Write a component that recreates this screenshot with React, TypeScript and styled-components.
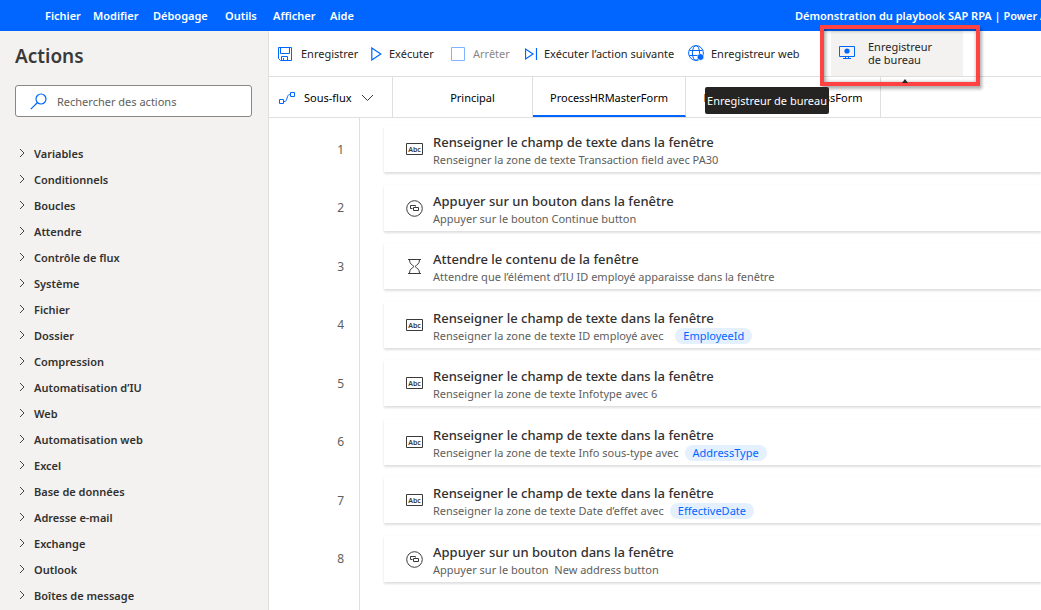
import React from "react";
import styled, { createGlobalStyle, css } from "styled-components";

const blue = "#0066ff";
const line = "#e1dfdd";

const GlobalStyle = createGlobalStyle`
  * { box-sizing: border-box; }
  html, body { height: 100%; }
  #root { height: 100%; }
  body {
    margin: 0;
    overflow: hidden;
    background: #fff;
    color: #252423;
    font-family: "Noto Sans", "Open Sans", sans-serif;
    font-size: 11px;
    line-height: 16px;
  }
  button, input { font: inherit; color: inherit; }
  button { border: 0; padding: 0; background: none; cursor: pointer; text-align: left; white-space: nowrap; }
  svg { display: block; flex: none; }
`;

const Page = styled.div`
  display: flex;
  flex-direction: column;
  min-height: 100%;
`;

const TopBar = styled.header`
  display: flex;
  justify-content: space-between;
  align-items: center;
  height: 31px;
  padding-left: 45px;
  background: ${blue};
  color: #fff;
  font-weight: 600;
`;

const Menu = styled.nav`
  display: grid;
  grid-template-columns: 48px 60px 72px 48px 57px 40px;
`;

const WindowTitle = styled.div`
  flex: none;
  width: 246px;
  overflow: hidden;
  white-space: nowrap;
`;

const Body = styled.div`
  display: flex;
  flex: 1;
`;

const Sidebar = styled.aside`
  flex: none;
  width: 269px;
  padding: 12px 16px 0 15px;
  border-right: 1px solid ${line};
  background: #f3f2f1;
`;

const Heading = styled.h1`
  margin: 0;
  font-size: 19px;
  line-height: 26px;
  font-weight: 600;
  color: #3b3a39;
`;

const SearchBox = styled.label`
  display: flex;
  align-items: center;
  gap: 10px;
  height: 32px;
  margin-top: 16px;
  padding: 0 14px;
  border: 1px solid #8a8886;
  border-radius: 3px;
  background: #fff;
`;

const SearchInput = styled.input`
  flex: 1;
  min-width: 0;
  padding: 2px 0 0;
  border: 0;
  outline: 0;
  background: none;
  &::placeholder { color: #605e5c; opacity: 1; }
`;

const Tree = styled.ul`
  margin: 24px 0 0;
  padding: 0;
  list-style: none;
`;

const TreeButton = styled.button`
  display: flex;
  align-items: center;
  gap: 8px;
  width: 100%;
  height: 26px;
  padding-left: 3px;
  color: #323130;
  font-weight: 600;
`;

const Main = styled.main`
  display: flex;
  flex: 1;
  flex-direction: column;
  min-width: 0;
`;

const Toolbar = styled.div`
  display: grid;
  grid-template-columns: 93px 80px 74px 163px 143px 132px;
  height: 46px;
  padding-left: 9px;
  border-bottom: 1px solid ${line};
`;

const Tool = styled.button<{ $slot: number }>`
  display: grid;
  grid-template-columns: ${(p) => p.$slot}px auto;
  justify-content: start;
  align-items: center;
  &:disabled { color: #8a8886; cursor: default; }
`;

const RecorderSlot = styled.div`
  position: relative;
`;

const Recorder = styled.button`
  display: flex;
  align-items: center;
  gap: 13px;
  width: 100%;
  height: 45px;
  padding: 0 0 2px 8px;
  background: #f3f2f1;
  line-height: 13px;
`;

const Highlight = styled.div`
  position: absolute;
  inset: -6px -17px -10px -11px;
  border: 4px solid #ff4343;
  box-shadow: 2px 3px 3px rgba(0, 0, 0, 0.3), inset 1px 1px 4px rgba(0, 0, 0, 0.45);
  pointer-events: none;
`;

const TooltipArrow = styled.span`
  position: absolute;
  left: 71px;
  top: 48px;
  border: 3px solid transparent;
  border-top: 0;
  border-bottom: 4px solid #252423;
`;

const Tooltip = styled.div`
  position: absolute;
  right: 134px;
  top: 56px;
  z-index: 1;
  height: 27px;
  padding: 0 2px;
  border-radius: 2px;
  background: #252423;
  color: #fff;
  line-height: 28px;
  white-space: nowrap;
`;

const Tabs = styled.div`
  display: grid;
  grid-template-columns: 124px 140px 153px 195px;
  height: 41px;
  border-bottom: 1px solid ${line};
`;

const Tab = styled.button<{ $active?: boolean; $indent?: number }>`
  padding: 2px 0 0 ${(p) => p.$indent ?? 0}px;
  text-align: center;
  border-right: 1px solid ${line};
  color: #000;
  ${(p) => p.$active && css`border-bottom: 2px solid ${blue}; padding-top: 4px;`}
`;

const Subflows = styled(Tab)`
  display: flex;
  align-items: center;
  gap: 9px;
`;

const Steps = styled.ol`
  flex: 1;
  margin: 0;
  padding: 0;
  list-style: none;
  background: linear-gradient(to right, transparent 90px, ${line} 90px, ${line} 91px, transparent 91px);
`;

const Step = styled.li`
  display: grid;
  grid-template-columns: 75px 1fr;
  column-gap: 40px;
  height: 58px;
  padding-top: 8px;
  &:nth-child(odd) { height: 59px; }
`;

const StepNumber = styled.span`
  align-self: center;
  padding-bottom: 4px;
  text-align: right;
  color: #605e5c;
  font-size: 12px;
`;

const Card = styled.div`
  display: flex;
  align-items: center;
  gap: 10px;
  height: 46px;
  padding-left: 22px;
  box-shadow: 0 2px 2px rgba(0, 0, 0, 0.12), 0 0 2px rgba(0, 0, 0, 0.03);
  background: #fff;
`;

const StepBody = styled.div`
  padding-top: 3px;
`;

const StepTitle = styled.h2`
  margin: 0;
  color: #323130;
  font-size: 13px;
  line-height: 18px;
  font-weight: 500;
  white-space: nowrap;
`;

const StepText = styled.p`
  margin: 0;
  color: #605e5c;
  line-height: 17px;
  white-space: pre;
`;

const Variable = styled.span`
  display: inline-block;
  margin-left: 6px;
  padding: 0 8px;
  border-radius: 8px;
  background: #e5f0ff;
  color: ${blue};
  line-height: 16px;
`;

const Stroke = ({ w, h, c = blue, children }: { w: number; h: number; c?: string; children: React.ReactNode }) => (
  <svg width={w} height={h} viewBox={`0 0 ${w} ${h}`} fill="none" stroke={c} aria-hidden="true">{children}</svg>
);

const SaveIcon = () => (
  <Stroke w={14} h={14}>
    <path d="M.5 .5h13v13h-11l-2-2zM2.5 .5v6h9v-6M3.5 13.5v-4h6v4M5.5 13v-2" />
  </Stroke>
);
const PlayIcon = () => <Stroke w={11} h={14}><path d="M.8 1v12L9.800 7z" strokeWidth="1.2" /></Stroke>;
const StopIcon = () => <Stroke w={15} h={14} c="#7fb2ff"><path d="M.5 .5h13v13H.5z" /></Stroke>;
const NextIcon = () => <Stroke w={14} h={14}><path d="M.5 2v10L8 7zM11.500 1v12" strokeWidth="1.200" /></Stroke>;
const GlobeIcon = () => (
  <Stroke w={17} h={17}>
    <circle cx="8" cy="8" r="7.400" />
    <ellipse cx="8" cy="8" rx="3.600" ry="7.400" />
    <path d="M1.500 5.500h13M1.500 10.500h13" />
    <circle cx="12.500" cy="12" r="3.300" fill={blue} stroke="#fff" strokeWidth=".6" />
  </Stroke>
);
const MonitorIcon = () => (
  <Stroke w={16} h={14}>
    <path d="M.5 .5h15v10H.5zM6.500 10.500v2M9.500 10.500v2M4 12.500h8" />
    <circle cx="8" cy="5" r="2.600" fill={blue} stroke="none" />
  </Stroke>
);
const FlowIcon = () => (
  <Stroke w={16} h={14}>
    <path d="M.5 8.500h4v4h-4zM11.500 1.500h4v4h-4zM4.500 10.500h1.500c2 0 2-7 4.500-7h1" />
  </Stroke>
);
const SearchIcon = () => (
  <Stroke w={17} h={17}><circle cx="11" cy="6" r="5" strokeWidth="1.200" /><path d="M7.500 9.500L.8 16.200" strokeWidth="1.200" /></Stroke>
);
const ChevronDown = () => <Stroke w={13} h={8} c="#3b3a39"><path d="M1 1l5.500 5.500L12 1" /></Stroke>;
const ChevronRight = () => <Stroke w={8} h={12} c="#484644"><path d="M2 1l4 4-4 4" /></Stroke>;

const AbcIcon = () => (
  <Stroke w={17} h={12} c="#3b3a39">
    <path d="M.5 .5h16v11H.5z" />
    <text x="8.500" y="8.500" textAnchor="middle" fontSize="7" fontWeight="600" fill="#3b3a39" stroke="none">Abc</text>
  </Stroke>
);
const PressIcon = () => (
  <Stroke w={17} h={17} c="#3b3a39">
    <circle cx="8.500" cy="8.500" r="7.800" />
    <path d="M6.500 8.500h-2v-3h5v1M7.500 7.500h5v3h-5z" />
  </Stroke>
);
const HourglassIcon = () => (
  <Stroke w={17} h={15} c="#3b3a39">
    <path d="M2 .5h13M2 14.500h13M3.500 1c0 4 3 5 4.500 6.500C6.500 9 3.500 10 3.500 14M13.500 1c0 4-3 5-4.500 6.500 1.500 1.500 4.500 2.500 4.500 6.500" />
  </Stroke>
);

const icons = { text: <AbcIcon />, press: <PressIcon />, wait: <HourglassIcon /> };
const fill = "Renseigner le champ de texte dans la fenêtre";
const press = "Appuyer sur un bouton dans la fenêtre";

const steps: { icon: keyof typeof icons; title: string; text: string; variable?: string }[] = [
  { icon: "text", title: fill, text: "Renseigner la zone de texte Transaction field avec PA30" },
  { icon: "press", title: press, text: "Appuyer sur le bouton Continue button" },
  { icon: "wait", title: "Attendre le contenu de la fenêtre", text: "Attendre que l’élément d’IU ID employé apparaisse dans la fenêtre" },
  { icon: "text", title: fill, text: "Renseigner la zone de texte ID employé avec  ", variable: "EmployeeId" },
  { icon: "text", title: fill, text: "Renseigner la zone de texte Infotype avec 6" },
  { icon: "text", title: fill, text: "Renseigner la zone de texte Info sous-type avec", variable: "AddressType" },
  { icon: "text", title: fill, text: "Renseigner la zone de texte Date d’effet avec", variable: "EffectiveDate" },
  { icon: "press", title: press, text: "Appuyer sur le bouton  New address button" },
];

const categories = [
  "Variables", "Conditionnels", "Boucles", "Attendre", "Contrôle de flux", "Système", "Fichier", "Dossier",
  "Compression", "Automatisation d’IU", "Web", "Automatisation web", "Excel", "Base de données",
  "Adresse e-mail", "Exchange", "Outlook", "Boîtes de message",
];

export default function App() {
  return (
    <Page>
      <GlobalStyle />
      <TopBar>
        <Menu>
          {["Fichier", "Modifier", "Débogage", "Outils", "Afficher", "Aide"].map((m) => <button key={m}>{m}</button>)}
        </Menu>
        <WindowTitle>Démonstration du playbook SAP RPA | Power Automate</WindowTitle>
      </TopBar>
      <Body>
        <Sidebar>
          <Heading>Actions</Heading>
          <SearchBox>
            <SearchIcon />
            <SearchInput type="search" placeholder="Rechercher des actions" aria-label="Rechercher des actions" />
          </SearchBox>
          <Tree>
            {categories.map((c) => (
              <li key={c}><TreeButton><ChevronRight />{c}</TreeButton></li>
            ))}
          </Tree>
        </Sidebar>
        <Main>
          <Toolbar>
            <Tool $slot={23}><SaveIcon />Enregistrer</Tool>
            <Tool $slot={18}><PlayIcon />Exécuter</Tool>
            <Tool $slot={22} disabled><StopIcon />Arrêter</Tool>
            <Tool $slot={19}><NextIcon />Exécuter l’action suivante</Tool>
            <Tool $slot={23}><GlobeIcon />Enregistreur web</Tool>
            <RecorderSlot>
              <Recorder><MonitorIcon /><span>Enregistreur<br />de bureau</span></Recorder>
              <Highlight />
              <TooltipArrow />
              <Tooltip role="tooltip">Enregistreur de bureau</Tooltip>
            </RecorderSlot>
          </Toolbar>
          <Tabs>
            <Subflows $indent={10}><FlowIcon />Sous-flux<ChevronDown /></Subflows>
            <Tab $indent={20}>Principal</Tab>
            <Tab $active>ProcessHRMasterForm</Tab>
            <Tab>ProcessEmployeeAddressForm</Tab>
          </Tabs>
          <Steps>
            {steps.map((s, i) => (
              <Step key={i}>
                <StepNumber>{i + 1}</StepNumber>
                <Card>
                  {icons[s.icon]}
                  <StepBody>
                    <StepTitle>{s.title}</StepTitle>
                    <StepText>{s.text}{s.variable && <Variable>{s.variable}</Variable>}</StepText>
                  </StepBody>
                </Card>
              </Step>
            ))}
          </Steps>
        </Main>
      </Body>
    </Page>
  );
}
